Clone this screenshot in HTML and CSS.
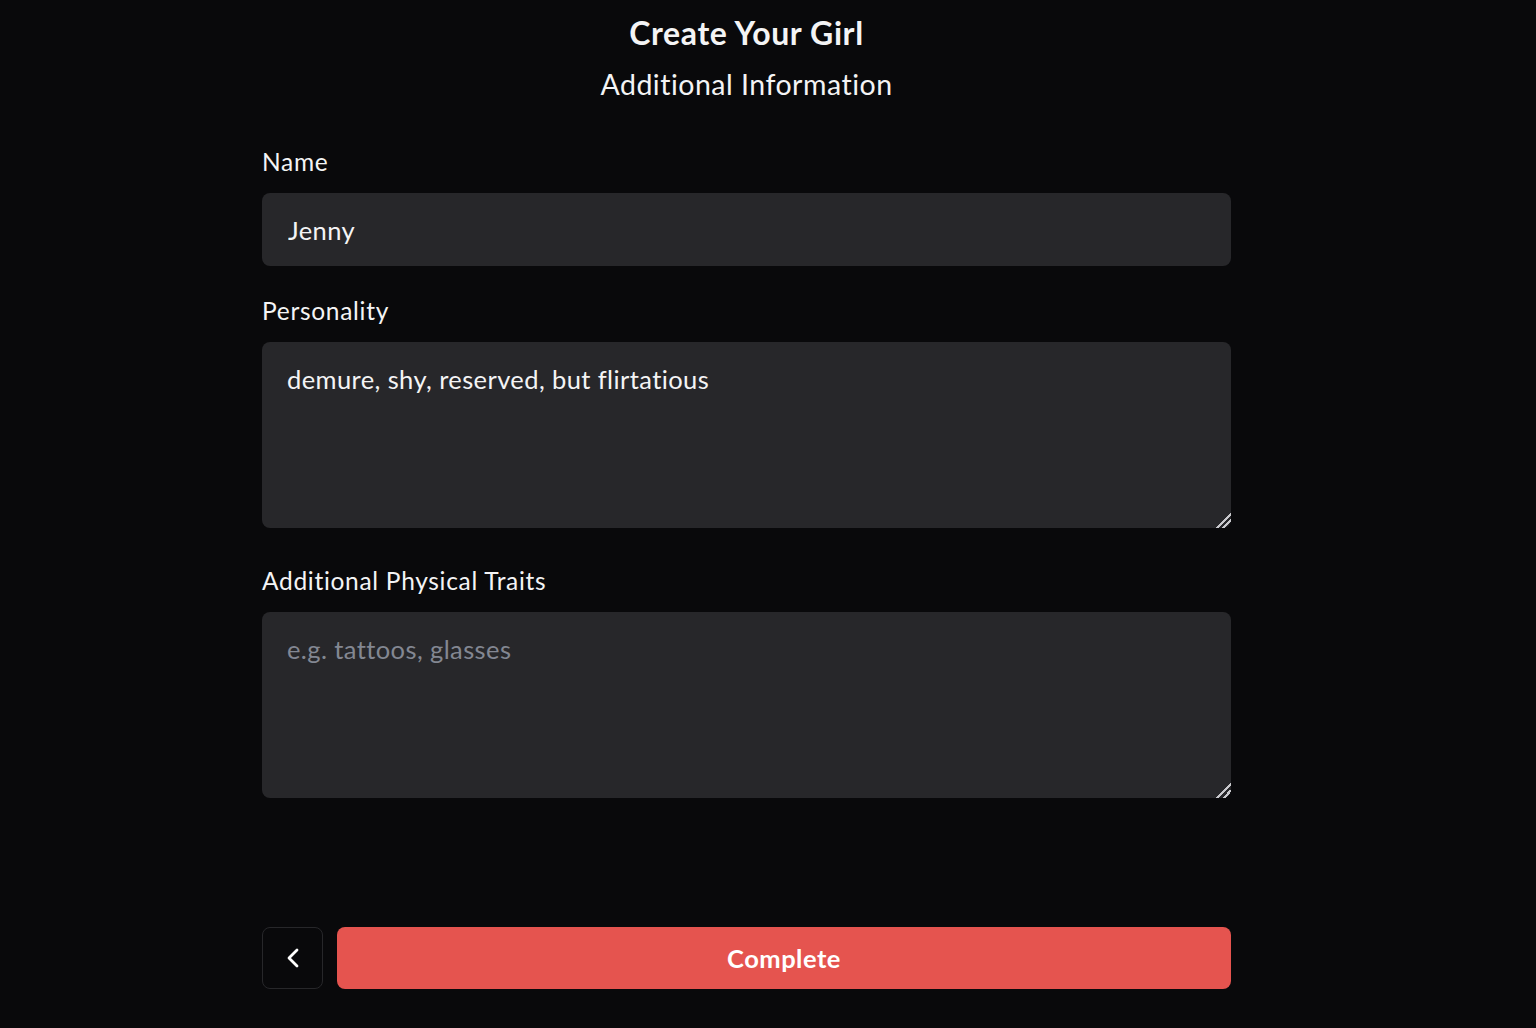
FILE: index.html
```html
<!DOCTYPE html>
<html lang="en">
<head>
<meta charset="utf-8">
<title>Create Your Girl</title>
<link rel="stylesheet" href="styles.css">
</head>
<body>
<main class="page">
  <header class="head">
    <h1 class="title">Create Your Girl</h1>
    <h2 class="subtitle">Additional Information</h2>
  </header>
  <form class="form">
    <div class="field">
      <label class="label" for="name">Name</label>
      <input class="input" id="name" type="text" value="Jenny">
    </div>
    <div class="field">
      <label class="label" for="personality">Personality</label>
      <textarea class="input area" id="personality">demure, shy, reserved, but flirtatious</textarea>
    </div>
    <div class="field field-wide">
      <label class="label" for="traits">Additional Physical Traits</label>
      <textarea class="input area" id="traits" placeholder="e.g. tattoos, glasses"></textarea>
    </div>
    <div class="actions">
      <button type="button" class="back" aria-label="Back">
        <svg width="22" height="22" viewBox="0 0 22 22" fill="none" stroke="#ffffff" stroke-width="2.8" stroke-linecap="round" stroke-linejoin="round"><path d="M15 3 7 11l8 8"/></svg>
      </button>
      <button type="button" class="complete">Complete</button>
    </div>
  </form>
</main>
</body>
</html>
```
FILE: styles.css
```css
* { box-sizing: border-box; }
html, body {
  margin: 0;
  background: #09090b;
  color-scheme: dark;
}
body {
  font-family: "Lato", "Noto Sans", sans-serif;
  color: #f4f4f5;
}
.page {
  width: 969px;
  margin-left: 262px;
  padding-top: 15px;
}
.head {
  display: flex;
  flex-direction: column;
  align-items: center;
  gap: 15px;
}
.title {
  margin: 0;
  font-size: 32px;
  line-height: 36px;
  font-weight: 700;
  letter-spacing: 0.6px;
}
.subtitle {
  margin: 0;
  font-size: 28.5px;
  line-height: 36px;
  font-weight: 400;
  letter-spacing: 0.5px;
}
.form {
  display: flex;
  flex-direction: column;
  margin-top: 44px;
}
.field {
  display: flex;
  flex-direction: column;
  gap: 15px;
}
.field + .field { margin-top: 29px; }
.field-wide { margin-top: 37px !important; }
.label {
  font-size: 24.5px;
  line-height: 32px;
  color: #f4f4f5;
  letter-spacing: 0.7px;
}
.input {
  display: block;
  width: 100%;
  height: 73px;
  border: none;
  border-radius: 8px;
  background: #27272a;
  color: #f4f4f5;
  font-family: inherit;
  font-size: 25.5px;
  letter-spacing: 0.4px;
  padding: 0 26px;
  outline: none;
}
.area {
  height: 186px;
  padding: 19px 25px;
  line-height: 36px;
  resize: vertical;
}
.area::placeholder { color: #838792; }
.area::-webkit-resizer {
  background: linear-gradient(135deg,
    transparent 0 48%,
    #c8c8cc 48% 58%,
    transparent 58% 70%,
    #c8c8cc 70% 80%,
    transparent 80% 100%);
}
.actions {
  display: flex;
  gap: 14px;
  margin-top: 129px;
}
.back {
  flex: 0 0 61px;
  height: 62px;
  display: flex;
  align-items: center;
  justify-content: center;
  background: transparent;
  border: 1px solid #27272a;
  border-radius: 8px;
  padding: 0;
}
.complete {
  flex: 1;
  height: 62px;
  border: none;
  border-radius: 8px;
  background: #e5544f;
  color: #ffffff;
  font-family: inherit;
  font-size: 25.5px;
  font-weight: 700;
  letter-spacing: 0.5px;
}
```
